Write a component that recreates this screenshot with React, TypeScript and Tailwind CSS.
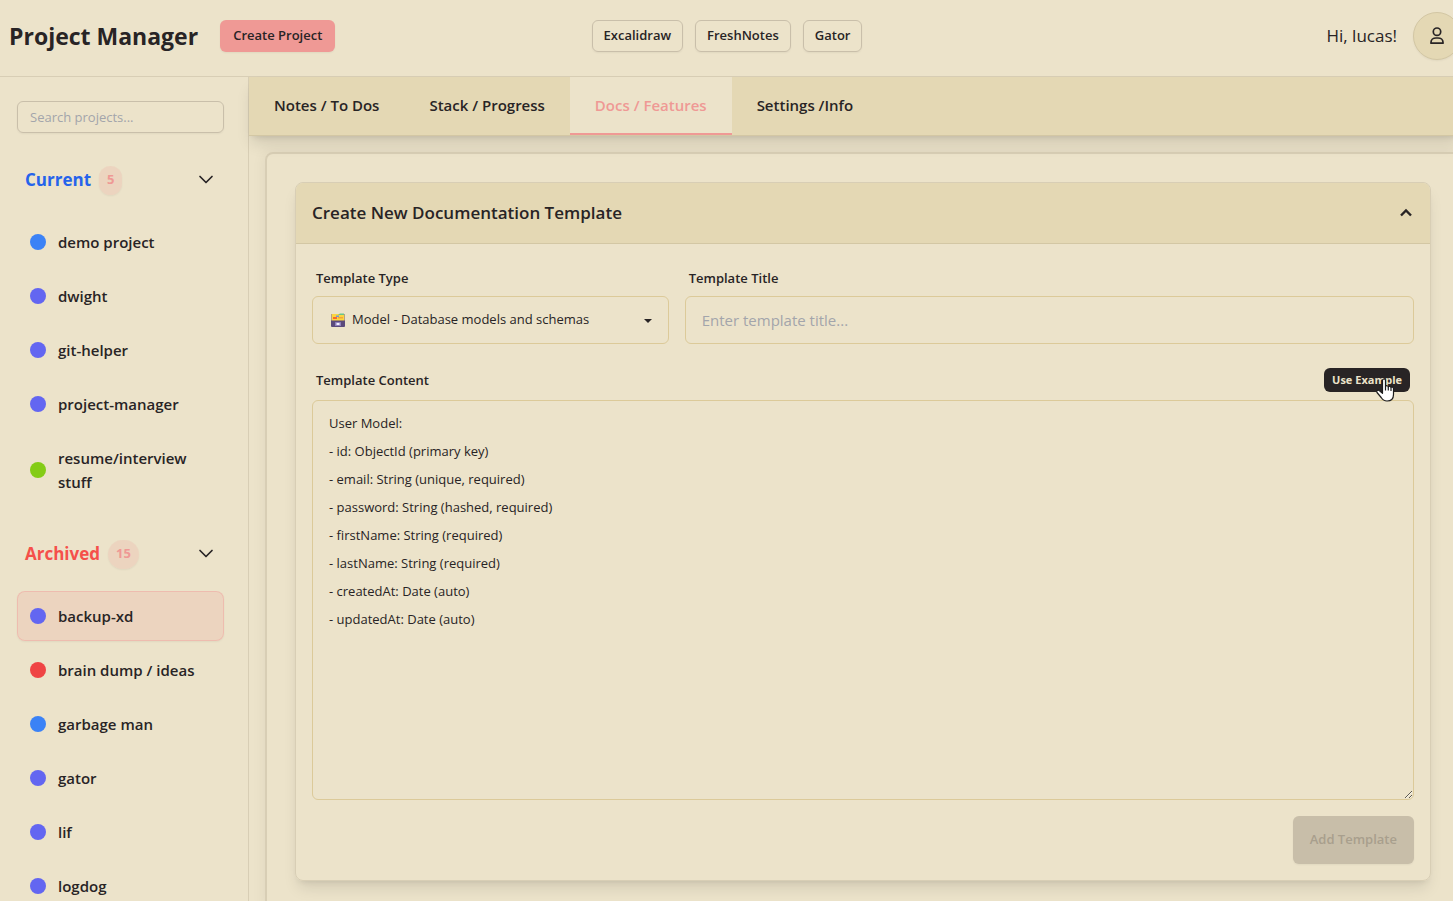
import React from "react";

type Project = { name: string; dot: string; active?: boolean };

const current: Project[] = [
  { name: "demo project", dot: "bg-[#3b82f6]" },
  { name: "dwight", dot: "bg-[#6366f1]" },
  { name: "git-helper", dot: "bg-[#6366f1]" },
  { name: "project-manager", dot: "bg-[#6366f1]" },
  { name: "resume/interview stuff", dot: "bg-[#84cc16]" },
];

const archived: Project[] = [
  { name: "backup-xd", dot: "bg-[#6366f1]", active: true },
  { name: "brain dump / ideas", dot: "bg-[#ef4444]" },
  { name: "garbage man", dot: "bg-[#3b82f6]" },
  { name: "gator", dot: "bg-[#6366f1]" },
  { name: "lif", dot: "bg-[#6366f1]" },
  { name: "logdog", dot: "bg-[#6366f1]" },
];

const tabs = ["Notes / To Dos", "Stack / Progress", "Docs / Features", "Settings /Info"];
const links = ["Excalidraw", "FreshNotes", "Gator"];

const example = `User Model:
- id: ObjectId (primary key)
- email: String (unique, required)
- password: String (hashed, required)
- firstName: String (required)
- lastName: String (required)
- createdAt: Date (auto)
- updatedAt: Date (auto)`;

function ProjectGroup({ title, color, count, items }: { title: string; color: string; count: number; items: Project[] }) {
  return (
    <section className="mt-6">
      <button type="button" className="flex h-[46px] w-full items-center px-2 text-left">
        <span className={`text-[17px] font-bold ${color}`}>{title}</span>
        <span className="ml-2 flex h-[29px] items-center rounded-full bg-[#ef9995]/20 px-2 text-[13px] font-bold text-[#ef9995] shadow-xs">
          {count}
        </span>
        <svg className="mr-0.5 ml-auto size-4" viewBox="0 0 16 16" fill="none" stroke="currentColor" strokeWidth="1.7" strokeLinecap="round" strokeLinejoin="round" aria-hidden="true">
          <path d="M2 4.500l6 6 6-6" />
        </svg>
      </button>
      <ul className="mt-[14px] flex flex-col gap-1">
        {items.map((p) => (
          <li key={p.name}>
            <button
              type="button"
              className={`flex w-full items-center gap-3 rounded-lg border p-3 text-left text-[15px] leading-6 font-semibold ${
                p.active ? "border-[#ef9995]/40 bg-[#ef9995]/20 shadow-xs" : "border-transparent"
              }`}
            >
              <span className={`size-4 shrink-0 rounded-full ${p.dot}`} />
              <span>{p.name}</span>
            </button>
          </li>
        ))}
      </ul>
    </section>
  );
}

export default function App() {
  return (
    <div className="h-screen overflow-hidden bg-[#ece3ca] font-['Open_Sans','Noto_Sans',sans-serif] text-[#282425]">
      <div className="flex h-full w-[calc(100%+8px)] flex-col">
        <header className="grid h-[77px] shrink-0 grid-cols-[1fr_auto_1fr] items-center border-b border-[#d8ceb5] pb-1 pl-[9px]">
          <div className="flex items-center gap-[22px]">
            <h1 className="text-[23px] leading-8 font-bold">Project Manager</h1>
            <button type="button" className="h-8 rounded-md bg-[#ef9995] px-[13px] text-[13px] font-semibold shadow-xs">
              Create Project
            </button>
          </div>
          <nav className="mr-4 flex gap-3">
            {links.map((l) => (
              <a key={l} href="#" className="flex h-8 items-center rounded-md border border-[#c9bfaa] px-[11px] text-[13px] font-semibold shadow-xs">
                {l}
              </a>
            ))}
          </nav>
          <div className="flex items-center justify-end gap-4">
            <span className="text-[17px]">Hi, lucas!</span>
            <button type="button" aria-label="Account" className="flex size-12 items-center justify-center rounded-full border border-[#d3c7a4] bg-[#e4d8b4] shadow-xs">
              <svg className="size-5" viewBox="0 0 20 20" fill="none" stroke="currentColor" strokeWidth="1.7" strokeLinejoin="round" aria-hidden="true">
                <circle cx="10" cy="5.700" r="3.700" />
                <path d="M4 17.200v-1a5 4.200 0 0 1 5-4.200h2a5 4.200 0 0 1 5 4.200v1z" />
              </svg>
            </button>
          </div>
        </header>

        <div className="flex min-h-0 flex-1">
          <aside className="w-[249px] shrink-0 overflow-hidden border-r border-[#d8ceb5] pt-6 pr-6 pl-[17px]">
            <input
              type="search"
              aria-label="Search projects"
              placeholder="Search projects..."
              className="block h-8 w-full rounded-md border border-[#c9bfaa] px-3 text-[13px] shadow-xs outline-none placeholder:text-[#a3a5ab]"
            />
            <ProjectGroup title="Current" color="text-[#2563eb]" count={5} items={current} />
            <ProjectGroup title="Archived" color="text-[#f5504a]" count={15} items={archived} />
          </aside>

          <main className="flex min-w-0 flex-1 flex-col">
            <div role="tablist" className="relative flex h-[59px] shrink-0 border-b border-[#d3c7a4] bg-[#e4d8b4] shadow-[0_10px_15px_-3px_rgb(0_0_0/0.12),0_4px_6px_-4px_rgb(0_0_0/0.12)]">
              {tabs.map((t) => (
                <button
                  key={t}
                  type="button"
                  role="tab"
                  aria-selected={t === "Docs / Features"}
                  className={`border-b-2 px-[25px] text-[15px] font-semibold ${
                    t === "Docs / Features" ? "border-[#ef9995] bg-[#ece3ca] text-[#ef9995]" : "border-transparent"
                  }`}
                >
                  {t}
                </button>
              ))}
            </div>

            <div className="mt-4 ml-4 flex-1 rounded-lg border-2 border-[#d8ceb5] p-7 shadow-[0_0_15px_0_rgb(0_0_0/0.06)]">
              <section className="rounded-lg border border-[#d8ceb5] shadow-[0_10px_15px_-3px_rgb(0_0_0/0.1),0_4px_6px_-4px_rgb(0_0_0/0.1)]">
                <button type="button" aria-expanded="true" className="flex h-[61px] w-full items-center justify-between rounded-t-[7px] border-b border-[#d3c7a4] bg-[#e4d8b4] px-4 text-left">
                  <span className="text-[17px] font-semibold">Create New Documentation Template</span>
                  <svg className="size-4" viewBox="0 0 16 16" fill="none" stroke="currentColor" strokeWidth="2.4" aria-hidden="true">
                    <path d="M3 10.500l5-5 5 5" />
                  </svg>
                </button>
                <form className="p-4" onSubmit={(e) => e.preventDefault()}>
                  <div className="grid grid-cols-3 gap-4">
                    <div>
                      <label htmlFor="type" className="block px-1 py-2 text-[13px] leading-5 font-semibold">
                        Template Type
                      </label>
                      <div className="relative">
                        <select id="type" className="block h-12 w-full appearance-none rounded-md border border-[#dcca99] pr-10 pl-[39px] text-[13px] outline-none">
                          <option>Model - Database models and schemas</option>
                        </select>
                        <svg className="pointer-events-none absolute top-4 left-[18px] size-4" viewBox="0 0 16 16" aria-hidden="true">
                          <rect x="1" y="2" width="14" height="7" fill="#b9a184" />
                          <rect x="2" y="2" width="12" height="7" fill="#fcd53f" />
                          <path d="M8 3l2-1.500h4V3z" fill="#6cc58a" />
                          <path d="M3 5h4v2H3z" fill="#f8672f" />
                          <path d="M6 3.500h3V5H6z" fill="#6d9ad8" />
                          <path d="M8 5h5v1.500H8z" fill="#f3a53b" />
                          <path d="M1 8.500h14V14a1 1 0 0 1-1 1H2a1 1 0 0 1-1-1z" fill="#5b4a7c" />
                          <rect x="5" y="10" width="6" height="4" rx="0.500" fill="#8f80bd" />
                          <rect x="6.500" y="11" width="3" height="2" fill="#f2eeff" />
                        </svg>
                        <svg className="pointer-events-none absolute top-[22px] right-[17px] h-1.5 w-2" viewBox="0 0 8 6" fill="currentColor" aria-hidden="true">
                          <path d="M0 1h8L4 5z" />
                        </svg>
                      </div>
                    </div>
                    <div className="col-span-2">
                      <label htmlFor="title" className="block px-1 py-2 text-[13px] leading-5 font-semibold">
                        Template Title
                      </label>
                      <input
                        id="title"
                        placeholder="Enter template title..."
                        className="block h-12 w-full rounded-md border border-[#dcca99] px-4 text-[15px] outline-none placeholder:text-[#a3a5ab]"
                      />
                    </div>
                  </div>

                  <div className="mt-4 flex h-10 items-center justify-between px-1">
                    <label htmlFor="content" className="text-[13px] leading-5 font-semibold">
                      Template Content
                    </label>
                    <div className="relative">
                      <button type="button" className="block h-6 rounded-md bg-[#282425] px-2 text-[11px] font-bold text-[#ece3ca]">
                        Use Example
                      </button>
                      <svg className="pointer-events-none absolute top-[10px] right-[15px] h-6 w-[19px]" viewBox="0 0 19 24" aria-hidden="true">
                        <path
                          d="M6.500 2.500c0-2 3-2 3 0v6c.4-1.200 2.600-1 2.800.4.500-1 2.500-.8 2.700.6.600-.8 2.500-.5 2.500 1v6c0 4-2.500 6.500-6.500 6.500-3 0-4.500-1.500-5.800-3.500L1 14.500c-.9-1.500.8-2.900 2.200-1.900l3.300 2.700z"
                          fill="#fff"
                          stroke="#1b1b1b"
                          strokeWidth="1.200"
                          strokeLinejoin="round"
                        />
                        <path d="M9.500 8.500v4M12.300 9v3.500M15 9.500V13" stroke="#1b1b1b" strokeWidth="1.200" />
                      </svg>
                    </div>
                  </div>
                  <textarea
                    id="content"
                    defaultValue={example}
                    className="block h-[400px] w-full resize-y rounded-md border border-[#dcca99] px-4 py-2 text-[13px] leading-7 outline-none"
                  />
                  <div className="mt-4 flex justify-end">
                    <button type="button" disabled className="h-12 rounded-md bg-[#c8bea9] px-[17px] text-[13px] font-semibold text-[#a89f8d] shadow-xs">
                      Add Template
                    </button>
                  </div>
                </form>
              </section>
            </div>
          </main>
        </div>
      </div>
    </div>
  );
}
